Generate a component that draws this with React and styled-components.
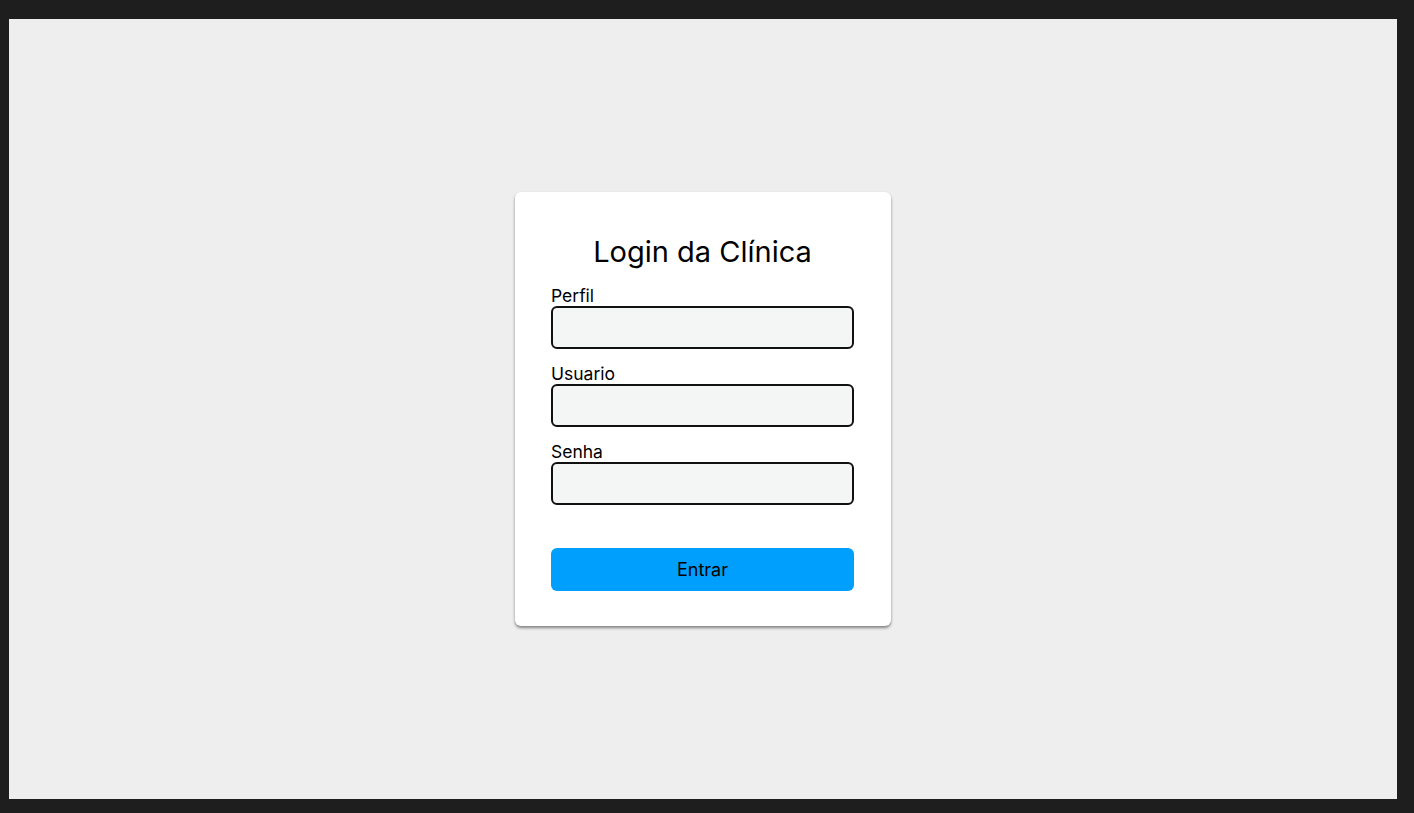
import React from "react";
import styled, { createGlobalStyle } from "styled-components";

const GlobalStyle = createGlobalStyle`
  html, body {
    margin: 0;
    padding: 0;
    background: #1e1e1e;
    font-family: Inter, "Noto Sans", sans-serif;
  }
  * {
    box-sizing: border-box;
  }
`;

const Frame = styled.div`
  width: 1414px;
  height: 813px;
  padding: 19px 17px 14px 9px;
  background: #1e1e1e;
`;

const Stage = styled.main`
  width: 100%;
  height: 100%;
  background: #eeeeee;
  display: flex;
  align-items: center;
  justify-content: center;
`;

const Card = styled.form`
  width: 376px;
  padding: 42px 37px 35px 36px;
  background: #ffffff;
  border-radius: 6px;
  box-shadow: 0 2px 3px rgba(0, 0, 0, 0.45);
  display: flex;
  flex-direction: column;
`;

const Title = styled.h1`
  margin: 0 0 16px;
  font-size: 29px;
  font-weight: 400;
  line-height: 35px;
  color: #000;
  text-align: center;
`;

const Field = styled.div`
  display: flex;
  flex-direction: column;
  & + & {
    margin-top: 14px;
  }
`;

const Label = styled.label`
  font-size: 17.5px;
  line-height: 21px;
  color: #000;
`;

const Input = styled.input`
  height: 43px;
  width: 100%;
  border: 2px solid #111;
  border-radius: 6px;
  background: #f4f5f5;
  padding: 0 10px;
  font: inherit;
  font-size: 16px;
  outline: none;
`;

const Button = styled.button`
  margin-top: 43px;
  height: 43px;
  width: 100%;
  border: none;
  border-radius: 6px;
  background: #009ffd;
  color: #000;
  font-family: Inter, "Noto Sans", sans-serif;
  font-size: 18px;
  cursor: pointer;
`;

const fields = [
  { id: "perfil", label: "Perfil", type: "text" },
  { id: "usuario", label: "Usuario", type: "text" },
  { id: "senha", label: "Senha", type: "password" },
];

export default function App() {
  return (
    <>
      <GlobalStyle />
      <Frame>
        <Stage>
          <Card onSubmit={e => e.preventDefault()}>
            <Title>Login da Clínica</Title>
            {fields.map(f => (
              <Field key={f.id}>
                <Label htmlFor={f.id}>{f.label}</Label>
                <Input id={f.id} type={f.type} />
              </Field>
            ))}
            <Button type="submit">Entrar</Button>
          </Card>
        </Stage>
      </Frame>
    </>
  );
}
